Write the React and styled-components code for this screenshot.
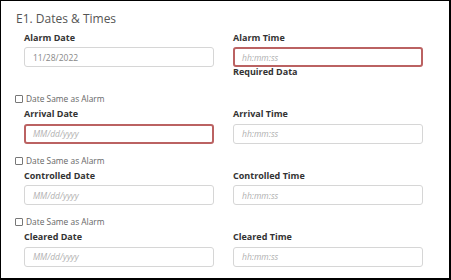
import React from 'react'
import styled, { createGlobalStyle } from 'styled-components'

const GlobalStyle = createGlobalStyle`
  html, body {
    margin: 0;
    padding: 0;
    background: #fff;
  }
  * {
    box-sizing: border-box;
  }
`;

const Frame = styled.section`
  width: 451px;
  height: 280px;
  border: 1px solid #000;
  border-right-width: 2px;
  border-bottom-width: 2px;
  padding: 10px 27px 0 0;
  font-family: 'Open Sans', 'Liberation Sans', sans-serif;
  background: #fff;
  overflow: hidden;
`;

const Title = styled.h2`
  margin: 0 0 4.5px 15px;
  font-size: 12px;
  line-height: 16px;
  font-weight: 400;
  color: #555;
`;

const Group = styled.div`
  margin-top: ${props => (props.$first ? '0' : '11px')};
`;

const CheckRow = styled.label`
  display: flex;
  align-items: center;
  gap: 3px;
  margin: 0 0 3px 14px;
  height: 12px;
  font-size: 8.4px;
  line-height: 12px;
  color: #666;
`;

const Box = styled.span`
  width: 8px;
  height: 8px;
  border: 1px solid #777;
  border-radius: 1px;
  background: #fff;
`;

const Fields = styled.div`
  display: grid;
  grid-template-columns: 190px 190px;
  column-gap: 19px;
  padding-left: 23px;
`;

const Field = styled.div`
  display: flex;
  flex-direction: column;
`;

const Label = styled.span`
  font-size: 9px;
  line-height: 12px;
  font-weight: 700;
  color: #333;
  margin-bottom: 3.5px;
`;

const Input = styled.div`
  height: 20px;
  border: ${props => (props.$error ? '2px solid #bb6262' : '1px solid #d6d6d6')};
  border-radius: 3px;
  padding-left: ${props => (props.$error ? '7px' : '8px')};
  display: flex;
  align-items: center;
  font-size: 8.5px;
  color: ${props => (props.$hint ? '#b0b0b0' : '#888')};
  font-style: ${props => (props.$hint ? 'italic' : 'normal')};
`;

const ErrorText = styled.span`
  font-size: 9px;
  line-height: 10px;
  font-weight: 700;
  color: #333;
  margin-bottom: 5px;
`;

const rows = [
  { left: 'Arrival Date', right: 'Arrival Time', leftError: true },
  { left: 'Controlled Date', right: 'Controlled Time' },
  { left: 'Cleared Date', right: 'Cleared Time' },
];

const App = () => {
  return (
    <>
      <GlobalStyle />
      <Frame>
        <Title>E1. Dates &amp; Times</Title>
        <Group $first>
          <Fields>
            <Field>
              <Label>Alarm Date</Label>
              <Input>11/28/2022</Input>
            </Field>
            <Field>
              <Label>Alarm Time</Label>
              <Input $hint $error>hh:mm:ss</Input>
              <ErrorText>Required Data</ErrorText>
            </Field>
          </Fields>
        </Group>
        {rows.map(row => (
          <Group key={row.left}>
            <CheckRow>
              <Box />
              Date Same as Alarm
            </CheckRow>
            <Fields>
              <Field>
                <Label>{row.left}</Label>
                <Input $hint $error={row.leftError}>MM/dd/yyyy</Input>
              </Field>
              <Field>
                <Label>{row.right}</Label>
                <Input $hint>hh:mm:ss</Input>
              </Field>
            </Fields>
          </Group>
        ))}
      </Frame>
    </>
  )
}

export default App
